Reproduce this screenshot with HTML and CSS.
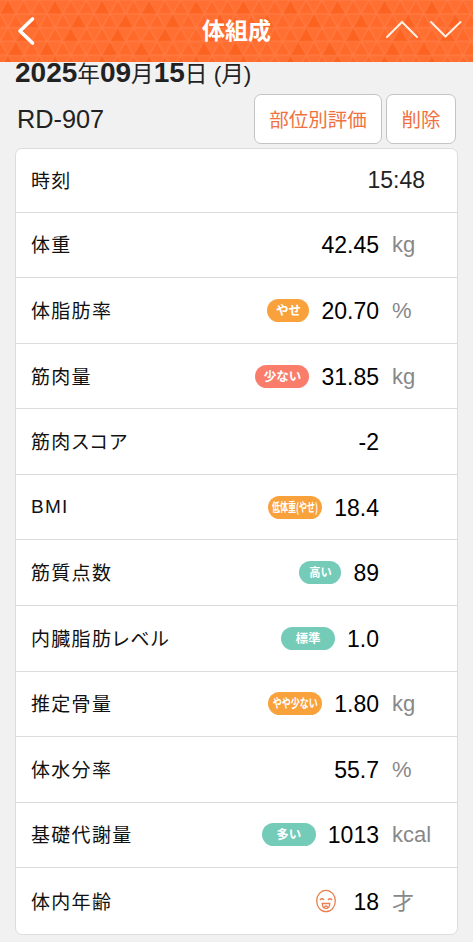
FILE: index.html
```html
<!DOCTYPE html>
<html lang="ja">
<head>
<meta charset="utf-8">
<title>体組成</title>
<link rel="stylesheet" href="styles.css">
</head>
<body>
<header class="topbar">
  <svg class="pattern" width="473" height="62" aria-hidden="true">
    <defs>
      <pattern id="lattice" width="15.700" height="27.600" patternUnits="userSpaceOnUse">
        <path class="fill-mid" d="M0 13.800L7.850 0L15.700 13.800zM-7.850 27.600L0 13.800L7.850 27.600zM7.850 27.600L15.700 13.800L23.550 27.600z"/>
        <path class="grid-line" d="M0 0H15.700M0 13.800H15.700M0 27.600H15.700M-7.850 27.600L7.850 0L23.550 27.600M0 13.800L7.850 27.600L15.700 13.800"/>
      </pattern>
      <pattern id="shades" width="94.200" height="55.200" patternUnits="userSpaceOnUse">
        <path class="fill-dark" d="M0 13.800L7.850 0L15.700 13.800zM47.100 13.800L54.950 0L62.800 13.800zM23.550 27.600L31.400 13.800L39.250 27.600zM70.650 27.600L78.500 13.800L86.350 27.600zM15.700 41.400L23.550 27.600L31.400 41.400zM62.800 41.400L70.650 27.600L78.500 41.400zM39.250 55.200L47.100 41.400L54.950 55.200zM7.850 55.200L15.700 41.400L23.550 55.200z"/>
      </pattern>
    </defs>
    <rect width="473" height="62" fill="url(#lattice)"/>
    <rect width="473" height="62" fill="url(#shades)"/>
  </svg>
  <svg class="back" width="20" height="32" viewBox="0 0 20 32"><path d="M16.5 4L4 16L16.5 28"/></svg>
  <h1 class="title">体組成</h1>
  <svg class="steps" width="80" height="24" viewBox="0 0 80 24"><path d="M3 20L18 5L33 20M47 5L61.500 19.500L76.500 5"/></svg>
</header>
<main class="content">
  <p class="date"><b>2025</b>年<b>09</b>月<b>15</b>日 (月)</p>
  <div class="device">
    <h2 class="model">RD-907</h2>
    <div class="actions">
      <button class="button wide">部位別評価</button>
      <button class="button">削除</button>
    </div>
  </div>
  <ul class="card">
    <li class="row time"><span class="label">時刻</span><span class="value">15:48</span></li>
    <li class="row"><span class="label">体重</span><span class="value">42.45</span><span class="unit">kg</span></li>
    <li class="row"><span class="label">体脂肪率</span><span class="badge orange small"><span>やせ</span></span><span class="value">20.70</span><span class="unit">%</span></li>
    <li class="row"><span class="label">筋肉量</span><span class="badge red"><span>少ない</span></span><span class="value">31.85</span><span class="unit">kg</span></li>
    <li class="row"><span class="label">筋肉スコア</span><span class="value">-2</span><span class="unit"></span></li>
    <li class="row"><span class="label latin">BMI</span><span class="badge orange"><span class="squeeze-more">低体重(やせ)</span></span><span class="value">18.4</span><span class="unit"></span></li>
    <li class="row"><span class="label">筋質点数</span><span class="badge green small"><span class="squeeze-slight">高い</span></span><span class="value">89</span><span class="unit"></span></li>
    <li class="row"><span class="label">内臓脂肪レベル</span><span class="badge green"><span>標準</span></span><span class="value">1.0</span><span class="unit"></span></li>
    <li class="row"><span class="label">推定骨量</span><span class="badge orange"><span class="squeeze">やや少ない</span></span><span class="value">1.80</span><span class="unit">kg</span></li>
    <li class="row"><span class="label">体水分率</span><span class="value">55.7</span><span class="unit">%</span></li>
    <li class="row"><span class="label">基礎代謝量</span><span class="badge green"><span>多い</span></span><span class="value">1013</span><span class="unit">kcal</span></li>
    <li class="row"><span class="label">体内年齢</span><svg class="face" width="22" height="24" viewBox="0 0 22 24"><ellipse cx="11" cy="12" rx="9.300" ry="10.700"/><path d="M5 11Q7 8.500 9 11M13 11Q15 8.500 17 11M7.200 14.500H14.800Q14.500 19.500 11 19.500Q7.500 19.500 7.200 14.500zM9 18.500Q11 15.500 13 18.500"/></svg><span class="value">18</span><span class="unit">才</span></li>
  </ul>
</main>
</body>
</html>
```
FILE: styles.css
```css
* { box-sizing: border-box; }
body {
  margin: 0;
  height: 942px;
  overflow: hidden;
  background: #f1f1f1;
  color: #222;
  font-family: "Liberation Sans", "Noto Sans CJK JP", sans-serif;
}
.topbar {
  position: relative;
  z-index: 1;
  display: grid;
  grid-template-columns: 100px 1fr 100px;
  align-items: center;
  height: 62px;
  background: #ff6f31;
}
.pattern { position: absolute; inset: 0; z-index: -1; }
.fill-mid { fill: #ff6929; }
.fill-dark { fill: #f95a14; opacity: 0.45; }
.grid-line { fill: none; stroke: #ff7a43; stroke-width: 1.3; }
.back { margin-left: 16px; }
.back path { fill: none; stroke: #fff; stroke-width: 3.6; stroke-linecap: round; stroke-linejoin: round; }
.title { margin: 0; color: #fff; font-size: 23px; line-height: 30px; font-weight: 700; text-align: center; }
.steps { justify-self: end; margin-right: 9px; margin-top: -5px; }
.steps path { fill: none; stroke: #fff0e6; stroke-width: 2; stroke-linecap: round; }
.content { padding: 0 15px; }
.date { margin: -6px 0 0; height: 36px; line-height: 34px; font-size: 22.6px; white-space: nowrap; }
.date b { font-size: 28px; }
.device { display: flex; justify-content: space-between; align-items: center; height: 52px; margin-top: 1px; }
.model { margin: 1px 0 0 2px; font-size: 25.3px; font-weight: 400; }
.actions { display: flex; gap: 4px; margin-right: 2px; }
.button {
  width: 70px;
  height: 50px;
  padding: 0 0 1px;
  border: 1.5px solid #c4c4c4;
  border-radius: 7px;
  background: #fff;
  color: #f0713f;
  font: 19.5px "Noto Sans CJK JP", sans-serif;
}
.button.wide { width: 128px; }
.card {
  margin: 3px 0 0;
  padding: 0;
  width: 443px;
  border: 1px solid #ddd;
  border-radius: 7px;
  background: #fff;
  list-style: none;
}
.row {
  display: flex;
  align-items: center;
  height: 65.57px;
  padding: 0 15px;
  border-bottom: 1px solid #dcdcdc;
}
.row:last-child { border-bottom: 0; }
.row.time { height: 63.6px; }
.label {
  flex: 1;
  margin-top: -2px;
  color: #111;
  font: 19px "Noto Sans CJK JP", sans-serif;
  font-feature-settings: "palt";
  letter-spacing: 1.3px;
}
.label.latin { margin-top: 0; font-family: "Liberation Sans", sans-serif; }
.value { color: #000; font-size: 23px; line-height: 28px; margin-top: 1px; }
.time .value { margin: 0 17px 0 0; color: #222; }
.unit { width: 50px; margin: 1px 0 0 13px; color: #888; font: 22px/28px "Liberation Sans", "Noto Sans CJK JP", sans-serif; }
.badge {
  display: flex;
  align-items: center;
  justify-content: center;
  width: 54px;
  height: 23px;
  margin-right: 12px;
  border-radius: 12px;
  color: #fff;
  font: 700 12.500px/20px "Noto Sans CJK JP", sans-serif;
  white-space: nowrap;
}
.badge span { margin-top: -1px; }
.badge.small { width: 42px; }
.orange { background: #f9a13b; }
.red { background: #fa7d6c; }
.green { background: #73cbb8; }
.squeeze { transform: scaleX(0.72); }
.squeeze-slight { transform: scaleX(0.9); }
.squeeze-more { transform: scaleX(0.64); }
.face { margin-right: 16px; }
.face ellipse, .face path { fill: none; stroke: #e8804f; stroke-width: 1.3; }
```
